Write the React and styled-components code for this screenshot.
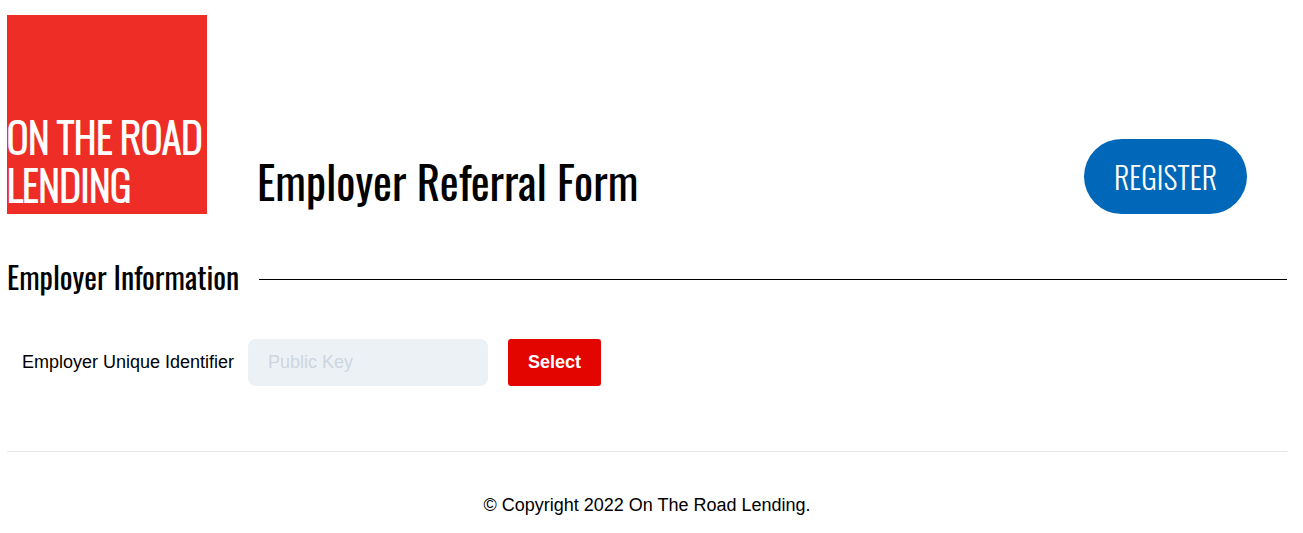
import React from "react";
import styled, { createGlobalStyle } from "styled-components";

const GlobalStyle = createGlobalStyle`
  *, *::before, *::after { box-sizing: border-box; }
  body {
    margin: 0;
    background: #fff;
    color: #000;
    font: 18px/24px "Liberation Sans", Arial, sans-serif;
  }
`;

const display = `"Oswald", "Liberation Sans Narrow", "Liberation Sans", sans-serif`;

const Page = styled.div`
  padding: 15px 16px 16px 7px;
`;

const Header = styled.header`
  display: flex;
  align-items: flex-end;
  gap: 50px;
  padding-right: 40px;
`;

const Logo = styled.a`
  display: flex;
  flex-direction: column;
  justify-content: flex-end;
  flex: none;
  width: 200px;
  height: 199px;
  padding-bottom: 6px;
  background: #ee2e26;
  color: #fff;
  font: 200 41px/48px ${display};
  -webkit-text-stroke: 2px #fff;
  white-space: nowrap;
  text-decoration: none;
`;

const Title = styled.h1`
  flex: 1;
  margin: 0;
  padding-bottom: 3px;
  font: 400 45px/60px ${display};
`;

const RegisterButton = styled.button`
  height: 75px;
  padding: 0 30px;
  border: 0;
  border-radius: 38px;
  background: #0067b9;
  color: #fff;
  font: 300 30px/40px ${display};
  cursor: pointer;
`;

const SectionHeading = styled.div`
  display: flex;
  align-items: center;
  gap: 20px;
  margin-top: 41px;
`;

const SectionTitle = styled.h2`
  margin: 0;
  padding-bottom: 4px;
  font: 400 30px/44px ${display};
`;

const Rule = styled.hr`
  flex: 1;
  margin: 0;
  border: 0;
  border-top: 1px solid #000;
`;

const Form = styled.form`
  display: flex;
  align-items: center;
  gap: 20px;
  padding: 36px 0 65px 15px;
`;

const FieldLabel = styled.label`
  width: 206px;
  padding-bottom: 2px;
  white-space: nowrap;
`;

const KeyInput = styled.input`
  width: 240px;
  height: 47px;
  padding: 0 20px;
  border: 0;
  border-radius: 8px;
  background: #ecf1f6;
  color: #000;
  font: inherit;
  &::placeholder {
    color: #cdd5e0;
    opacity: 1;
  }
`;

const SelectButton = styled.button`
  height: 47px;
  padding: 0 20px 2px;
  border: 0;
  border-radius: 3px;
  background: #e20500;
  color: #fff;
  font: inherit;
  font-weight: 700;
  cursor: pointer;
`;

const Footer = styled.footer`
  padding-top: 41px;
  border-top: 1px solid #e6e6e6;
  text-align: center;
`;

export default function App() {
  return (
    <>
      <GlobalStyle />
      <Page>
        <Header>
          <Logo href="#">
            <span>ON THE ROAD</span>
            <span>LENDING</span>
          </Logo>
          <Title>Employer Referral Form</Title>
          <RegisterButton type="button">REGISTER</RegisterButton>
        </Header>
        <main>
          <SectionHeading>
            <SectionTitle>Employer Information</SectionTitle>
            <Rule />
          </SectionHeading>
          <Form onSubmit={(event) => event.preventDefault()}>
            <FieldLabel htmlFor="public-key">Employer Unique Identifier</FieldLabel>
            <KeyInput id="public-key" type="text" placeholder="Public Key" />
            <SelectButton type="submit">Select</SelectButton>
          </Form>
        </main>
        <Footer>© Copyright 2022 On The Road Lending.</Footer>
      </Page>
    </>
  );
}
